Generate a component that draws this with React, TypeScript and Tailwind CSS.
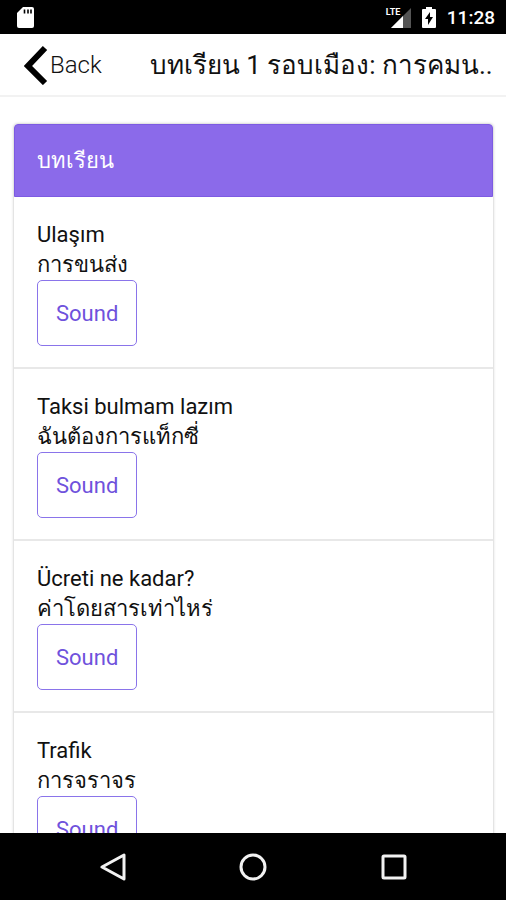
import React from "react";

const phrases = [
  { turkish: "Ulaşım", thai: "การขนส่ง" },
  { turkish: "Taksi bulmam lazım", thai: "ฉันต้องการแท็กซี่" },
  { turkish: "Ücreti ne kadar?", thai: "ค่าโดยสารเท่าไหร่" },
  { turkish: "Trafik", thai: "การจราจร" },
];

function StatusBar() {
  return (
    <div className="flex h-[34px] shrink-0 items-center justify-between bg-black pl-[17px] pr-[11px] pt-0.5 text-white">
      {/* sd card */}
      <svg className="h-[22px] w-[18px]" viewBox="0 0 18 22">
        <path d="M6 0h9a2 2 0 0 1 2 2v17a2 2 0 0 1-2 2H2a2 2 0 0 1-2-2V6z" fill="#fff" />
        <path d="M7.5 2.5v4M11 2.5v4M14 2.5v4" stroke="#000" strokeWidth="1.6" />
      </svg>

      <div className="flex items-center">
        <div className="relative h-[22px] w-[26px]">
          <svg className="h-[22px] w-[26px]" viewBox="0 0 26 22">
            <path d="M25 1v20H5z" fill="#555" />
            <path d="M17 9v12H5z" fill="#fff" />
          </svg>
          <span className="absolute left-0 top-0 text-[9px] font-bold leading-[10px]">
            LTE
          </span>
        </div>
        {/* charging battery */}
        <svg className="ml-[10px] h-[22px] w-[14px]" viewBox="0 0 14 22">
          <path d="M4 0h6v2h3a1 1 0 0 1 1 1v17a1 1 0 0 1-1 1H1a1 1 0 0 1-1-1V3a1 1 0 0 1 1-1h3z" fill="#fff" />
          <path d="M8 5 3 12h3v6l5-8H8z" fill="#000" />
        </svg>
        <span className="ml-[11px] text-[19px] font-medium leading-6">11:28</span>
      </div>
    </div>
  );
}

function Header() {
  return (
    <header className="flex h-[63px] shrink-0 items-center border-b-2 border-[#f2f2f2] pl-6 pr-2">
      <button type="button" className="flex items-center text-2xl font-light">
        <svg className="h-10 w-[26px]" viewBox="0 0 26 40" fill="none">
          <path d="M21 3 4 21l17 17" stroke="#000" strokeWidth="6" />
        </svg>
        Back
      </button>
      <h1 className="min-w-0 flex-1 truncate pl-12 text-[26px] leading-10">
        บทเรียน 1 รอบเมือง: การคมน..
      </h1>
    </header>
  );
}

function NavBar() {
  return (
    <nav className="flex h-[67px] shrink-0 items-center justify-center gap-28 bg-black">
      <button type="button" aria-label="Back">
        <svg className="size-7" viewBox="0 0 28 28" fill="none" stroke="#f2f2f2" strokeWidth="3">
          <path d="M25 2v24L3 14z" strokeLinejoin="round" />
        </svg>
      </button>
      <button type="button" aria-label="Home">
        <svg className="size-7" viewBox="0 0 28 28" fill="none" stroke="#f2f2f2" strokeWidth="3">
          <circle cx="14" cy="14" r="12" />
        </svg>
      </button>
      <button type="button" aria-label="Recent apps">
        <svg className="size-7" viewBox="0 0 28 28" fill="none" stroke="#f2f2f2" strokeWidth="3">
          <rect x="4" y="3" width="22" height="22" rx="1" />
        </svg>
      </button>
    </nav>
  );
}

export default function App() {
  return (
    <div className="flex h-screen flex-col overflow-hidden bg-white font-[Roboto,'Noto_Sans',sans-serif] text-[#111]">
      <StatusBar />
      <Header />

      <main className="min-h-0 flex-1 overflow-hidden pl-[14px] pr-[13px] pt-[27px]">
        <section className="rounded-sm shadow-[0_0_3px_rgba(0,0,0,0.3)]">
          <h2 className="rounded-t-sm border border-[#7d5be2] bg-[#8b6aea] px-[22px] pb-[19px] pt-5 text-[22px] leading-8 text-white">
            บทเรียน
          </h2>
          <ul>
            {phrases.map((phrase) => (
              <li
                key={phrase.turkish}
                className="border-b-2 border-[#e8e8e8] px-[23px] pb-[21px] pt-[23px]"
              >
                <p className="text-[22px] leading-[30px]">{phrase.turkish}</p>
                <p className="text-[22px] leading-[30px]">{phrase.thai}</p>
                <button
                  type="button"
                  className="block h-[66px] rounded-[5px] border border-[#8a74ea] px-[18px] text-[22px] text-[#6f52dc]"
                >
                  Sound
                </button>
              </li>
            ))}
          </ul>
        </section>
      </main>

      <NavBar />
    </div>
  );
}
